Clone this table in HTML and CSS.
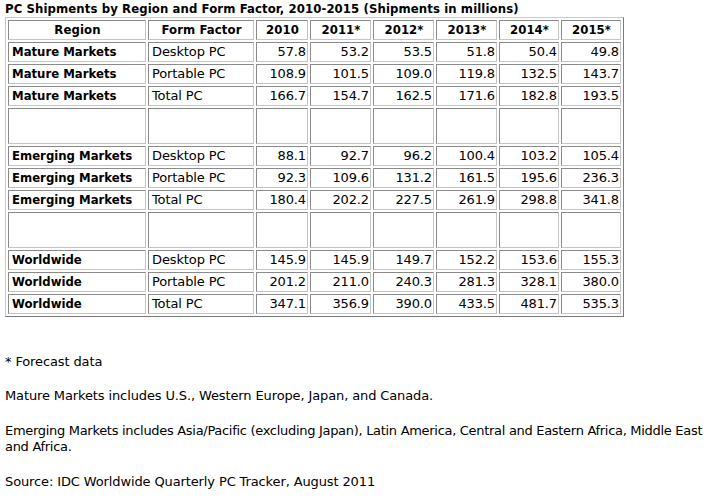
FILE: index.html
```html
<!DOCTYPE html>
<html>
<head>
<meta charset="utf-8">
<title>PC Shipments by Region and Form Factor</title>
<link rel="stylesheet" href="styles.css">
</head>
<body>
<div class="title">PC Shipments by Region and Form Factor, 2010-2015 (Shipments in millions)</div>
<table class="data">
  <colgroup>
    <col class="c-region"><col class="c-ff"><col class="c-2010"><col class="c-y"><col class="c-y"><col class="c-y"><col class="c-y2"><col class="c-y2">
  </colgroup>
  <thead>
    <tr><th>Region</th><th>Form Factor</th><th>2010</th><th>2011*</th><th>2012*</th><th>2013*</th><th>2014*</th><th>2015*</th></tr>
  </thead>
  <tbody>
    <tr><td class="rg">Mature Markets</td><td>Desktop PC</td><td class="n">57.8</td><td class="n">53.2</td><td class="n">53.5</td><td class="n">51.8</td><td class="n">50.4</td><td class="n">49.8</td></tr>
    <tr><td class="rg">Mature Markets</td><td>Portable PC</td><td class="n">108.9</td><td class="n">101.5</td><td class="n">109.0</td><td class="n">119.8</td><td class="n">132.5</td><td class="n">143.7</td></tr>
    <tr><td class="rg">Mature Markets</td><td>Total PC</td><td class="n">166.7</td><td class="n">154.7</td><td class="n">162.5</td><td class="n">171.6</td><td class="n">182.8</td><td class="n">193.5</td></tr>
    <tr class="spacer"><td></td><td></td><td></td><td></td><td></td><td></td><td></td><td></td></tr>
    <tr><td class="rg">Emerging Markets</td><td>Desktop PC</td><td class="n">88.1</td><td class="n">92.7</td><td class="n">96.2</td><td class="n">100.4</td><td class="n">103.2</td><td class="n">105.4</td></tr>
    <tr><td class="rg">Emerging Markets</td><td>Portable PC</td><td class="n">92.3</td><td class="n">109.6</td><td class="n">131.2</td><td class="n">161.5</td><td class="n">195.6</td><td class="n">236.3</td></tr>
    <tr><td class="rg">Emerging Markets</td><td>Total PC</td><td class="n">180.4</td><td class="n">202.2</td><td class="n">227.5</td><td class="n">261.9</td><td class="n">298.8</td><td class="n">341.8</td></tr>
    <tr class="spacer"><td></td><td></td><td></td><td></td><td></td><td></td><td></td><td></td></tr>
    <tr><td class="rg">Worldwide</td><td>Desktop PC</td><td class="n">145.9</td><td class="n">145.9</td><td class="n">149.7</td><td class="n">152.2</td><td class="n">153.6</td><td class="n">155.3</td></tr>
    <tr><td class="rg">Worldwide</td><td>Portable PC</td><td class="n">201.2</td><td class="n">211.0</td><td class="n">240.3</td><td class="n">281.3</td><td class="n">328.1</td><td class="n">380.0</td></tr>
    <tr><td class="rg">Worldwide</td><td>Total PC</td><td class="n">347.1</td><td class="n">356.9</td><td class="n">390.0</td><td class="n">433.5</td><td class="n">481.7</td><td class="n">535.3</td></tr>
  </tbody>
</table>
<div class="notes">
  <p class="note first">* Forecast data</p>
  <p class="note">Mature Markets includes U.S., Western Europe, Japan, and Canada.</p>
  <p class="note tight">Emerging Markets includes Asia/Pacific (excluding Japan), Latin America, Central and Eastern Africa, Middle East and Africa.</p>
  <p class="note">Source: IDC Worldwide Quarterly PC Tracker, August 2011</p>
</div>
</body>
</html>
```
FILE: styles.css
```css
html, body {
  background: #ffffff;
}
body {
  margin: 1px 5px 0 5px;
  font-family: "DejaVu Sans", Verdana, sans-serif;
  font-size: 13px;
  line-height: 16px;
  letter-spacing: -0.12px;
  color: #000000;
}
.title {
  font-family: "DejaVu Sans Condensed", "DejaVu Sans", sans-serif;
  font-weight: bold;
  letter-spacing: 0.1px;
  height: 16px;
}
.data {
  border-collapse: separate;
  border-spacing: 2px;
  table-layout: fixed;
  width: 619px;
  border-style: solid;
  border-width: 1px;
  border-color: #c8c8c8 #7a7a7a #7a7a7a #c8c8c8;
}
.c-region { width: 138px; }
.c-ff { width: 106px; }
.c-2010 { width: 52px; }
.c-y { width: 61px; }
.c-y2 { width: 60px; }
.data th,
.data td {
  box-sizing: border-box;
  padding: 1px 2px 1px 3px;
  height: 20px;
  border-style: solid;
  border-width: 1px;
  border-color: #8a8a8a #c4c4c4 #c4c4c4 #8a8a8a;
  white-space: nowrap;
  vertical-align: middle;
}
.data th {
  font-family: "DejaVu Sans Condensed", "DejaVu Sans", sans-serif;
  font-weight: bold;
  text-align: center;
  letter-spacing: 0.1px;
}
.data td.rg {
  font-family: "DejaVu Sans Condensed", "DejaVu Sans", sans-serif;
  font-weight: bold;
  letter-spacing: 0px;
}
.data td.n {
  text-align: right;
  padding-right: 1px;
}
.data .spacer td {
  height: 36px;
}
.notes {
  margin-top: 37px;
}
.note {
  margin: 0 0 19px 0;
}
.note.first {
  margin-bottom: 18px;
}
.note.tight {
  letter-spacing: -0.3px;
}
```
